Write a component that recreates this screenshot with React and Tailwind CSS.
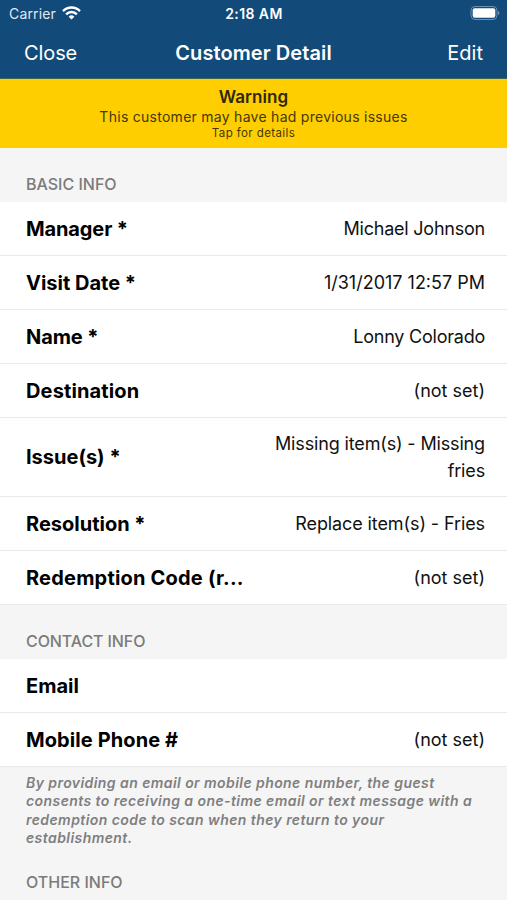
function Row({ label, value, tall, labelTracking = '', valueTracking = '' }) {
  return (
    <div className={`flex shrink-0 items-center justify-between border-b border-[#e9e9ea] bg-white pl-[26px] pr-[22px] ${tall ? 'h-[79px]' : 'h-[54px]'}`}>
      <div className={`whitespace-nowrap pt-px text-[20px] font-bold leading-[27px] ${labelTracking}`}>{label}</div>
      <div className={`whitespace-pre-line text-right text-[18px] leading-[27px] text-[#111] ${valueTracking}`}>{value}</div>
    </div>
  );
}

function Section({ children, className }) {
  return <div className={`shrink-0 pl-[26px] text-[16px] font-medium leading-5 text-[#7b7b7b] ${className}`}>{children}</div>;
}

export default function App() {
  return (
    <div className="flex h-[900px] w-[507px] flex-col overflow-hidden bg-[#f5f5f5] font-['Inter',sans-serif] text-black">
      <header className="h-[79px] shrink-0 border-b border-[#3f6553] bg-[#124a7a] text-white">
        <div className="grid h-[27px] grid-cols-3 items-center pl-[9px] pr-[7px] text-[14px]">
          <div className="flex items-center gap-[6px]">
            <span className="tracking-[0.15px] text-[#e0e9f1]">Carrier</span>
            <svg className="-mt-0.5" width="19" height="14" viewBox="0 0 19 14" fill="none" stroke="white" strokeWidth="2.4">
              <path d="M1 5.1a12 12 0 0 1 17 0M4.1 8.3a7.6 7.6 0 0 1 10.8 0" />
              <path d="M6.6 10.7a4.1 4.1 0 0 1 5.8 0L9.5 13.5z" fill="white" stroke="none" />
            </svg>
          </div>
          <span className="-ml-px text-center font-semibold tracking-[0.4px]">2:18 AM</span>
          <svg className="-mt-px justify-self-end" width="30" height="14" viewBox="0 0 30 14">
            <rect x="1" y=".5" width="26" height="13" rx="4" fill="none" stroke="#6f91b0" />
            <rect x="2.7" y="2.3" width="22.6" height="9.4" rx="2" fill="white" />
            <path d="M28 5c2 .7 2 3.3 0 4z" fill="#6f91b0" />
          </svg>
        </div>
        <div className="grid h-[51px] grid-cols-[1fr_auto_1fr] items-center px-6 text-[20px]">
          <span className="tracking-[-0.1px]">Close</span>
          <span className="font-semibold tracking-[0.08px]">Customer Detail</span>
          <span className="text-right">Edit</span>
        </div>
      </header>
      <div className="flex h-[69px] shrink-0 flex-col items-center bg-[#ffce00] pt-2 text-[#443809]">
        <div className="text-[17px] font-semibold leading-5 tracking-[0.1px] text-[#2d270d]">Warning</div>
        <div className="text-[14px] leading-5 tracking-[0.27px]">This customer may have had previous issues</div>
        <div className="text-[11.5px] leading-[13px] tracking-[0.4px]">Tap for details</div>
      </div>
      <Section className="h-[54px] pt-[26px]">BASIC INFO</Section>
      <Row label="Manager *" value="Michael Johnson" labelTracking="tracking-[-0.12px]" valueTracking="tracking-[-0.23px]" />
      <Row label="Visit Date *" value="1/31/2017 12:57 PM" />
      <Row label="Name *" value="Lonny Colorado" labelTracking="tracking-[-0.1px]" valueTracking="tracking-[-0.23px]" />
      <Row label="Destination" value="(not set)" labelTracking="tracking-[0.14px]" />
      <Row label="Issue(s) *" value={'Missing item(s) - Missing\nfries'} valueTracking="tracking-[-0.15px]" tall />
      <Row label="Resolution *" value="Replace item(s) - Fries" valueTracking="tracking-[-0.1px]" />
      <Row label="Redemption Code (r..." value="(not set)" labelTracking="tracking-[0.2px]" />
      <Section className="h-[54px] pt-[26px] tracking-[-0.1px]">CONTACT INFO</Section>
      <Row label="Email" value="" />
      <Row label="Mobile Phone #" value="(not set)" labelTracking="tracking-[0.1px]" />
      <p className="h-[79px] shrink-0 pl-[26px] pt-[7px] text-[14px] font-semibold italic leading-[18.3px] tracking-[0.43px] text-[#7f7f7f]">
        By providing an email or mobile phone number, the guest<br />consents to receiving a one-time email or text message with a<br />redemption code to scan when they return to your<br />establishment.
      </p>
      <Section className="pt-[26px]">OTHER INFO</Section>
    </div>
  );
}
